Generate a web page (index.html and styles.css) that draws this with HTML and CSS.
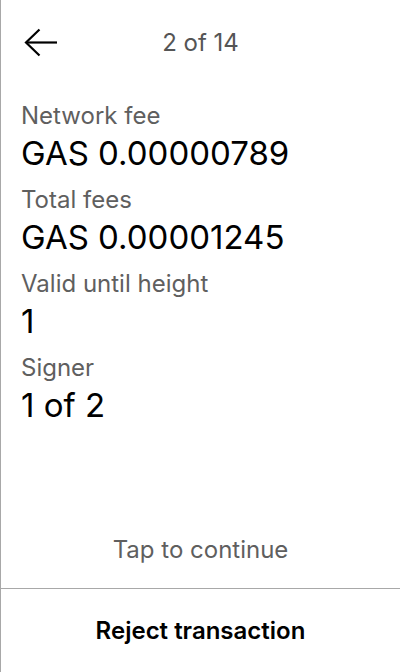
FILE: index.html
```html
<!DOCTYPE html>
<html lang="en">
<head>
<meta charset="utf-8">
<title>Review transaction</title>
<link rel="stylesheet" href="styles.css">
</head>
<body>
<div class="screen">
  <header class="header">
    <button class="back" aria-label="Back">
      <svg width="34" height="30" viewBox="0 0 34 30" fill="none" stroke="#000" stroke-width="2.2">
        <path d="M33 14.5H2"/>
        <path d="M15.5 1.5L2 14.5L15.5 27.5"/>
      </svg>
    </button>
    <div class="page">2 of 14</div>
    <div></div>
  </header>
  <main class="content">
    <div class="field">
      <div class="label">Network fee</div>
      <div class="value">GAS 0.00000789</div>
    </div>
    <div class="field">
      <div class="label">Total fees</div>
      <div class="value">GAS 0.00001245</div>
    </div>
    <div class="field">
      <div class="label">Valid until height</div>
      <div class="value">1</div>
    </div>
    <div class="field">
      <div class="label">Signer</div>
      <div class="value">1 of 2</div>
    </div>
  </main>
  <div class="tap">Tap to continue</div>
  <footer class="footer">
    <button class="reject">Reject transaction</button>
  </footer>
</div>
</body>
</html>
```

FILE: styles.css
```css
* { box-sizing: border-box; }
html, body { margin: 0; padding: 0; background: #fff; }
body { font-family: Inter, "Noto Sans", sans-serif; }
.screen {
  width: 400px;
  height: 672px;
  display: flex;
  flex-direction: column;
  border-left: 1px solid #a8a8a8;
}
.header {
  height: 86px;
  display: grid;
  grid-template-columns: 1fr auto 1fr;
  align-items: center;
  padding: 0 0 0 23px;
}
.back {
  background: none;
  border: 0;
  padding: 0;
  width: 34px;
  height: 30px;
  display: flex;
  justify-self: start;
}
.page {
  font-size: 24px;
  line-height: 28px;
  color: #555;
  margin-left: -23px;
}
.content {
  padding: 16px 20px 0 20px;
  display: flex;
  flex-direction: column;
  gap: 13px;
  flex: 1;
}
.field { display: flex; flex-direction: column; gap: 3px; }
.label {
  font-size: 24px;
  line-height: 28px;
  color: #5f5f5f;
}
.value {
  font-size: 33px;
  line-height: 40px;
  color: #000;
}
.tap {
  height: 76px;
  display: flex;
  align-items: center;
  justify-content: center;
  font-size: 24px;
  line-height: 28px;
  color: #5f5f5f;
}
.footer {
  height: 84px;
  border-top: 1px solid #a8a8a8;
  display: flex;
  align-items: center;
  justify-content: center;
}
.reject {
  background: none;
  border: 0;
  padding: 0;
  font-family: inherit;
  font-size: 24px;
  line-height: 28px;
  font-weight: 600;
  color: #000;
}
```
